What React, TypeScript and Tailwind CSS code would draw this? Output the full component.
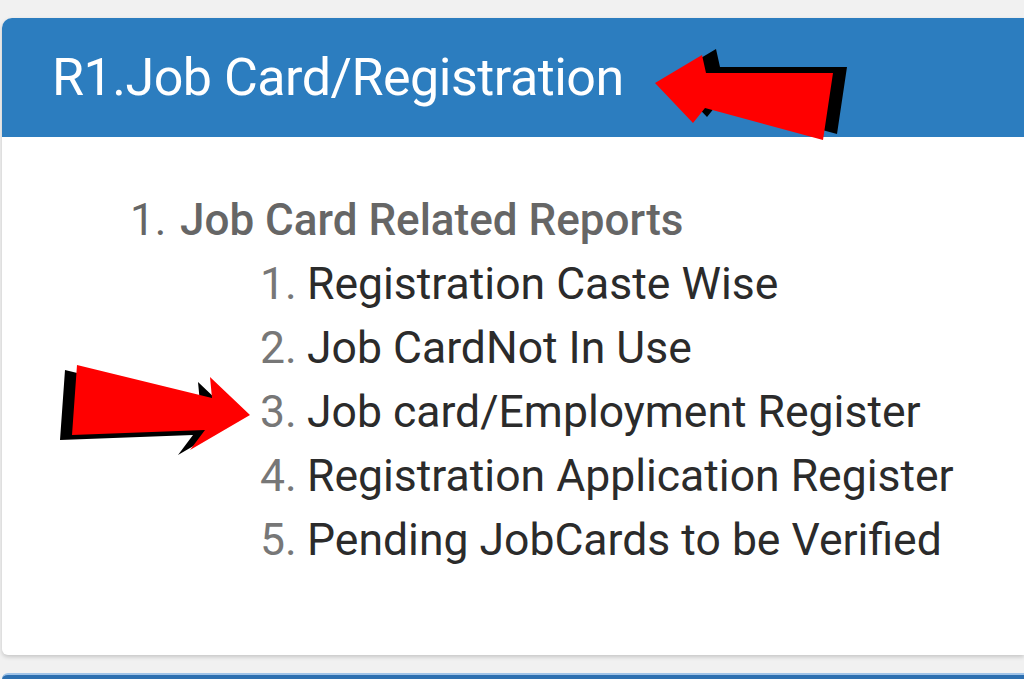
import React from 'react';

const subItems = [
  'Registration Caste Wise',
  'Job CardNot In Use',
  'Job card/Employment Register',
  'Registration Application Register',
  'Pending JobCards to be Verified',
];

const App: React.FC = () => {
  return (
    <div className="relative w-[1024px] h-[679px] overflow-hidden bg-[#f1f1f1] font-['Roboto',sans-serif]">
      <div className="h-[18px]" />

      {/* Card */}
      <div className="ml-[2px] bg-white rounded-tl-[10px] rounded-bl-[6px] shadow-[0_2px_4px_rgba(0,0,0,0.18)] overflow-hidden">
        <div className="h-[119px] bg-[#2c7dbf] flex items-center pl-[50px]">
          <h1 className="text-white text-[52px] leading-none tracking-[-0.5px]">R1.Job Card/Registration</h1>
        </div>

        <div className="h-[518px] pt-[51px] pl-[128px]">
          <div className="flex items-baseline text-[#666666] text-[44px] font-medium leading-[64px]">
            <span className="w-[50px] font-normal">1.</span>
            <span>Job Card Related Reports</span>
          </div>
          <ol className="pl-[130px]">
            {subItems.map((t, i) => (
              <li key={t} className="flex items-baseline text-[44.5px] leading-[64px]">
                <span className="w-[47px] text-[#777777]">{i + 1}.</span>
                <span className="text-[#2b2b2b]">{t}</span>
              </li>
            ))}
          </ol>
        </div>
      </div>

      <div className="mt-[18px] ml-[2px] h-[10px] bg-[#2c6fb0] border-t-[2px] border-[#9fc3e8] rounded-tl-[6px]" />

      {/* Arrows drawn over the content */}
      <svg className="absolute left-0 top-0 pointer-events-none" width="1024" height="679" viewBox="0 0 1024 679">
        <g transform="translate(14,-6)">
          <polygon points="655,83 702,55 706,73 833,73 823,140 705,108 693,123" fill="#000" />
        </g>
        <polygon points="655,83 702,55 706,73 833,73 823,140 705,108 693,123" fill="#ff0000" />

        <g transform="translate(-12,5)">
          <polygon points="77,365 212,398 210,377 250,415 190,450 205,430 72,435" fill="#000" />
        </g>
        <polygon points="77,365 212,398 210,377 250,415 190,450 205,430 72,435" fill="#ff0000" />
      </svg>
    </div>
  );
};

export default App;
